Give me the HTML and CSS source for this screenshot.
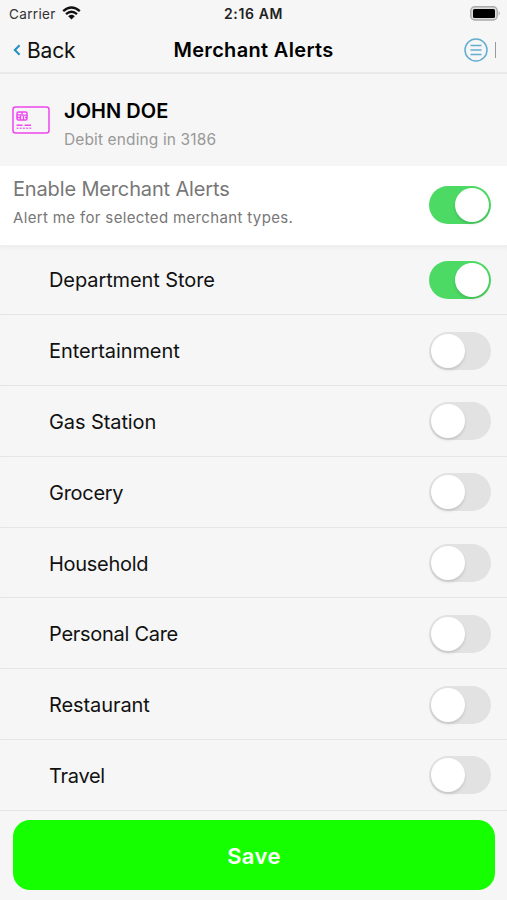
FILE: index.html
```html
<!DOCTYPE html>
<html lang="en">
<head>
<meta charset="utf-8">
<title>Merchant Alerts</title>
<link rel="stylesheet" href="styles.css">
</head>
<body>
<div class="status">
  <div class="carrier"><span class="carrier-name">Carrier</span>
    <svg class="wifi" width="19" height="14" viewBox="0 0 19 14" fill="none" stroke="#111" stroke-width="2.3"><path d="M1.2 5.2Q9.5-2.2 17.8 5.2M4 8.2Q9.5 3.2 15 8.2"/><path d="M6.2 10.2Q9.5 7.4 12.8 10.2L9.5 13.5Z" fill="#111" stroke="none"/></svg>
  </div>
  <div class="time">2:16 AM</div>
  <svg class="battery" width="31" height="15" viewBox="0 0 31 15"><rect x=".8" y=".8" width="26.4" height="13.2" rx="4" fill="#ddd" stroke="#aaa" stroke-width="1.4"/><rect x="3" y="3" width="22" height="9" rx="1.5" fill="#000"/><path d="M28.6 5Q31 7.4 28.6 9.8Z" fill="#aaa"/></svg>
</div>
<header class="nav">
  <a class="back"><svg width="8" height="12" viewBox="0 0 8 12" fill="none" stroke="#2090c4" stroke-width="2"><path d="M6.6 1.2 1.8 6l4.8 4.8"/></svg><span class="back-label">Back</span></a>
  <h1>Merchant Alerts</h1>
  <div class="tools"><svg width="24" height="24" viewBox="0 0 24 24" fill="none" stroke="#62aed0" stroke-width="1.5"><circle cx="12" cy="12" r="11"/><path d="M6.5 7.5h11M6.5 12h11M6.5 16.5h11"/></svg><i class="bar"></i></div>
</header>
<section class="account">
  <svg width="38" height="28" viewBox="0 0 38 28" fill="none" stroke="#ee45ee" stroke-width="1.5"><rect x="1" y="1" width="36" height="26" rx="2.5"/><rect x="5" y="6" width="10" height="8" rx="1.5"/><path d="M5 8.8h3.5v5M5 11.5h3.5M10 6v3.2h5M11.5 14v-4M13 11.5h2" stroke-width="1.3"/><path d="M4.5 19.2h6M12.5 19.2h6.5" stroke-width="1.5"/><path d="M4.5 22.2h15" stroke-width="1.4" stroke-dasharray="2 1.2" opacity=".75"/></svg>
  <div><div class="name">JOHN DOE</div><div class="card">Debit ending in 3186</div></div>
</section>
<section class="enable">
  <div><div class="enable-title">Enable Merchant Alerts</div><div class="enable-note">Alert me for selected merchant types.</div></div>
  <span class="toggle on"></span>
</section>
<ul class="list">
  <li><span>Department Store</span><span class="toggle on"></span></li>
  <li><span>Entertainment</span><span class="toggle"></span></li>
  <li><span>Gas Station</span><span class="toggle"></span></li>
  <li><span class="tight">Grocery</span><span class="toggle"></span></li>
  <li><span class="tight">Household</span><span class="toggle"></span></li>
  <li><span class="tight">Personal Care</span><span class="toggle"></span></li>
  <li><span>Restaurant</span><span class="toggle"></span></li>
  <li><span class="tight">Travel</span><span class="toggle"></span></li>
</ul>
<button class="save">Save</button>
</body>
</html>
```
FILE: styles.css
```css
* { box-sizing: border-box; }
body { margin: 0; width: 507px; height: 900px; overflow: hidden; background: #f6f6f6; color: #111; font-family: Inter, "Liberation Sans", sans-serif; white-space: nowrap; }
svg { display: block; flex: none; }
.status { height: 27px; display: grid; grid-template-columns: 1fr auto 1fr; align-items: center; padding: 0 6px 0 9px; }
.carrier { display: flex; align-items: center; gap: 6px; font-size: 13.5px; letter-spacing: .35px; color: #333; }
.wifi { margin-top: -2px; }
.time { font-size: 14px; letter-spacing: .6px; font-weight: 600; color: #222; margin-left: -3px; }
.battery { justify-self: end; }
.nav { height: 47px; display: grid; grid-template-columns: 1fr auto 1fr; align-items: center; border-bottom: 2px solid #e9e9e9; padding: 0 11px 0 13px; }
.back { display: flex; align-items: center; gap: 6px; font-size: 21px; letter-spacing: -.2px; }
.back-label { padding-top: 1px; }
h1 { margin: 0; font-size: 20px; letter-spacing: .33px; font-weight: 600; color: #000; margin-left: -2px; }
.tools { display: flex; justify-self: end; align-items: center; gap: 7px; }
.bar { width: 1px; height: 16px; background: #999; }
.account { height: 92px; display: flex; align-items: center; gap: 14px; padding-left: 12px; }
.name { font-size: 20px; line-height: 28px; letter-spacing: .05px; font-weight: 600; color: #000; margin-top: 11px; }
.card { font-size: 15.5px; line-height: 29px; letter-spacing: .12px; color: #999; }
.enable { height: 78.5px; background: #fff; display: flex; align-items: center; justify-content: space-between; padding: 0 16px 0 13px; color: #777; }
.enable-title { font-size: 20px; line-height: 28px; letter-spacing: -.15px; margin-top: -3px; }
.enable-note { font-size: 15px; line-height: 29px; letter-spacing: .35px; }
.list { list-style: none; margin: 0; padding: 0; box-shadow: inset 0 5px 5px -3px #eaeaea; }
.list li { height: 70.8px; display: flex; align-items: center; justify-content: space-between; padding: 1px 16px 0 49px; font-size: 20px; letter-spacing: -.09px; border-bottom: 1.5px solid #e5e5e5; }
.list li > :first-child { padding-top: 1px; }
.tight { letter-spacing: -.28px; }
.toggle { display: flex; align-items: center; width: 62.5px; height: 38px; border-radius: 19px; background: #e2e2e2; padding: 0 2px; }
.toggle::before { content: ""; width: 34px; height: 34px; border-radius: 50%; background: #fff; box-shadow: 0 2px 3px #0002; }
.toggle.on { background: #4cd964; justify-content: flex-end; }
.save { display: block; width: 482px; height: 70px; margin: 9px 0 0 13px; padding: 2px 0 0; border: 0; border-radius: 17px; background: #16ff00; color: #fff; font: 600 22px Inter, sans-serif; letter-spacing: .4px; }
```
